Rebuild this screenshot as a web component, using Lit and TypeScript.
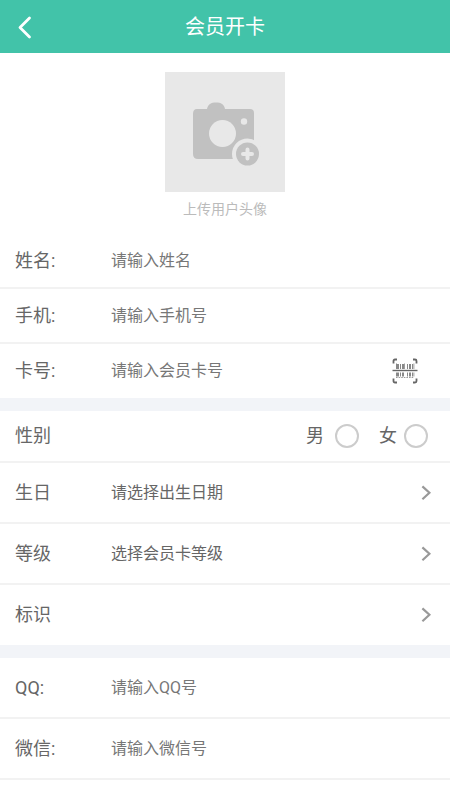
import { LitElement, html, css, svg } from "lit";
import { customElement } from "lit/decorators.js";

const chevron = html`<svg class="chevron" viewBox="0 0 12 16" aria-hidden="true">
  <path d="M2.4 1.4 L9.4 7.8 L2.4 14.2" fill="none" stroke="#999" stroke-width="2.2" />
</svg>`;

const bars = [
  [5, 2], [8, 1], [10, 2], [15, 1], [17, 2], [20, 1],
];

const scanIcon = html`<svg class="scan-icon" viewBox="0 0 26 26" aria-hidden="true">
  <path
    d="M1.5 5.5V3Q1.5 1.5 3 1.5H5 M21 1.5H23Q24.5 1.5 24.5 3V5.5 M24.5 20.5V23Q24.5 24.5 23 24.5H21 M5 24.5H3Q1.5 24.5 1.5 23V20.5"
    fill="none" stroke="#666" stroke-width="1.8" />
  <path d="M0.5 12.5H25.5" stroke="#666" stroke-width="1.4" />
  <g fill="#888">
    ${bars.map(([x, w]) => svg`
      <rect x=${x} y="6" width=${w} height="5" />
      <rect x=${x} y="14.5" width=${w} height="4" />`)}
    <path d="M4 5.5h1v5.5h-1z M13 5.5h-.8v5.5h.8z M21.5 5.5h.8v5.5h-.8z M4 14.5h1v4h-1z M21.5 14.5h.8v4h-.8z" />
  </g>
  <path d="M4 19.5H22" stroke="#999" stroke-width="1.2" stroke-dasharray="1.6 1" />
</svg>`;

@customElement("app-root")
export class AppRoot extends LitElement {
  static styles = css`
    :host {
      display: block;
      min-height: 100vh;
      background: #fff;
      color: #666;
      font-family: Roboto, "Noto Sans CJK SC", sans-serif;
      font-size: 18px;
      line-height: 24px;
    }
    * {
      box-sizing: border-box;
    }
    button, input, select {
      margin: 0;
      padding: 0;
      border: 0;
      background: none;
      color: inherit;
      font: inherit;
      border-radius: 0;
      appearance: none;
    }
    svg {
      display: block;
      flex: none;
    }
    .header {
      display: grid;
      grid-template-columns: 48px 1fr 48px;
      align-items: center;
      height: 53px;
      background: #42c3a9;
      color: #fff;
    }
    .back {
      height: 48px;
      padding-left: 17px;
    }
    .back-icon {
      width: 16px;
      height: 24px;
    }
    .title {
      margin: 0;
      font-size: 20px;
      font-weight: 400;
      text-align: center;
    }
    .avatar {
      display: flex;
      flex-direction: column;
      align-items: center;
      gap: 5px;
      width: 120px;
      margin: 19px auto 13px;
      color: #bbb;
      font-size: 14px;
    }
    .camera {
      width: 120px;
      height: 120px;
    }
    .group + .group {
      border-top: 13px solid #f2f4f8;
    }
    .row {
      display: flex;
      align-items: center;
      width: 100%;
      height: 61px;
      padding: 0 18px 0 15px;
      border-bottom: 2px solid #f2f2f2;
      text-align: left;
    }
    .row.last {
      height: 60px;
      border-bottom: 0;
    }
    .compact .row {
      height: 55px;
    }
    .compact .row:last-child {
      height: 54px;
      border-bottom: 0;
    }
    .row.gender {
      height: 52px;
      padding-right: 22px;
    }
    .label {
      flex: none;
      width: 96px;
    }
    .field {
      flex: 1;
      min-width: 0;
      height: 24px;
      font-size: 16px;
      line-height: 24px;
      outline: none;
    }
    .field::placeholder {
      color: #777;
      opacity: 1;
    }
    .scan {
      margin-right: 14px;
    }
    .scan-icon {
      width: 26px;
      height: 26px;
    }
    .chevron {
      width: 12px;
      height: 16px;
    }
    .choices {
      display: flex;
      gap: 20px;
      margin-left: auto;
    }
    .choice {
      display: flex;
      align-items: center;
      gap: 11px;
    }
    .choice + .choice {
      gap: 7px;
    }
    .radio {
      width: 24px;
      height: 24px;
      border: 2px solid #ccc;
      border-radius: 50%;
    }
    .radio:checked {
      border: 7px solid #42c3a9;
    }
  `;

  private textRow(id: string, label: string, placeholder: string, extra: unknown = "") {
    return html`<div class="row">
      <label class="label" for=${id}>${label}</label>
      <input class="field" id=${id} type="text" placeholder=${placeholder} />
      ${extra}
    </div>`;
  }

  render() {
    return html`
      <header class="header">
        <button class="back" aria-label="返回">
          <svg class="back-icon" viewBox="0 0 16 24" aria-hidden="true">
            <path d="M12.5 3 L3 12.5 L12.5 22" fill="none" stroke="#fff" stroke-width="2.8" stroke-linecap="round" stroke-linejoin="round" />
          </svg>
        </button>
        <h1 class="title">会员开卡</h1>
      </header>
      <button class="avatar">
        <svg class="camera" viewBox="0 0 120 120" aria-hidden="true">
          <rect width="120" height="120" fill="#e8e8e8" />
          <path
            d="M32 37H42C43 32 46 30.5 51 30.5S59 32 60 37H85Q89 37 89 41V82Q89 87 84 87H33Q28 87 28 82V42Q28 37 32 37Z"
            fill="#c1c1c1" />
          <circle cx="57.5" cy="61.5" r="13.5" fill="#e8e8e8" />
          <circle cx="79" cy="49.5" r="3.2" fill="#e8e8e8" />
          <circle cx="82.5" cy="82" r="15.5" fill="#e8e8e8" />
          <circle cx="82.5" cy="82" r="11.5" fill="#c1c1c1" />
          <path d="M82.5 77.5V86.5M78 82H87" stroke="#e8e8e8" stroke-width="4" stroke-linecap="round" />
        </svg>
        <span>上传用户头像</span>
      </button>
      <section class="group compact">
        ${this.textRow("name", "姓名:", "请输入姓名")}
        ${this.textRow("phone", "手机:", "请输入手机号")}
        ${this.textRow("card", "卡号:", "请输入会员卡号",
          html`<button class="scan" aria-label="扫描卡号">${scanIcon}</button>`)}
      </section>
      <section class="group">
        <div class="row gender" role="radiogroup" aria-labelledby="gender">
          <span class="label" id="gender">性别</span>
          <div class="choices">
            <label class="choice">男<input class="radio" type="radio" name="gender" value="male" /></label>
            <label class="choice">女<input class="radio" type="radio" name="gender" value="female" /></label>
          </div>
        </div>
        <button class="row">
          <span class="label">生日</span>
          <span class="field">请选择出生日期</span>
          ${chevron}
        </button>
        <div class="row">
          <label class="label" for="level">等级</label>
          <select class="field" id="level"><option>选择会员卡等级</option></select>
          ${chevron}
        </div>
        <div class="row last">
          <label class="label" for="mark">标识</label>
          <select class="field" id="mark"><option></option></select>
          ${chevron}
        </div>
      </section>
      <section class="group">
        ${this.textRow("qq", "QQ:", "请输入QQ号")}
        ${this.textRow("wechat", "微信:", "请输入微信号")}
      </section>
    `;
  }
}
